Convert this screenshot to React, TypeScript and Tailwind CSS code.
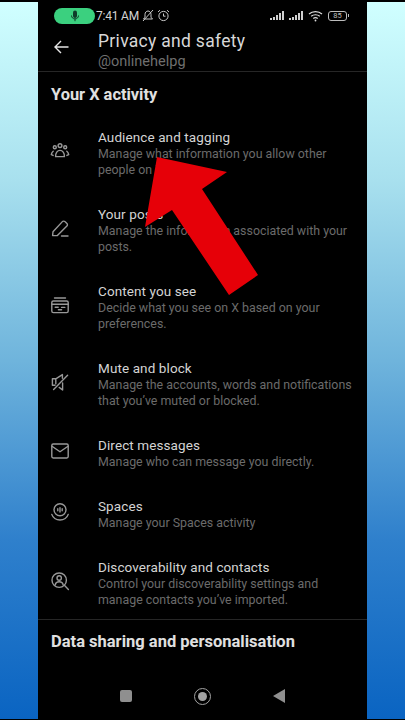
const rows = [
  { icon: 'people', title: 'Audience and tagging', desc: 'Manage what information you allow other people on X to see.' },
  { icon: 'pen', title: 'Your posts', desc: 'Manage the information associated with your posts.' },
  { icon: 'content', title: 'Content you see', desc: 'Decide what you see on X based on your preferences.' },
  { icon: 'mute', title: 'Mute and block', desc: 'Manage the accounts, words and notifications that you’ve muted or blocked.' },
  { icon: 'mail', title: 'Direct messages', desc: 'Manage who can message you directly.' },
  { icon: 'spaces', title: 'Spaces', desc: 'Manage your Spaces activity' },
  { icon: 'search', title: 'Discoverability and contacts', desc: 'Control your discoverability settings and manage contacts you’ve imported.' },
];

function RowIcon({ name }: { name: string }) {
  const common = {
    width: 20,
    height: 20,
    viewBox: '0 0 20 20',
    fill: 'none',
    stroke: '#989898',
    strokeWidth: 1.4,
    strokeLinecap: 'round' as const,
    strokeLinejoin: 'round' as const,
  };
  if (name === 'people')
    return (
      <svg {...common}>
        <circle cx="10" cy="4.6" r="1.9" />
        <circle cx="4.8" cy="6.2" r="1.5" />
        <circle cx="15.2" cy="6.2" r="1.5" />
        <path d="M5.6 15.6c-.2-3.6 1.8-6.2 4.4-6.2s4.6 2.6 4.4 6.2z" />
        <path d="M3.2 10.2c-1 .8-1.7 1.9-1.9 3.4l1.8.8M16.8 10.2c1 .8 1.7 1.9 1.9 3.4l-1.8.8" />
      </svg>
    );
  if (name === 'pen')
    return (
      <svg {...common}>
        <path d="M2.6 17.6l.4-3.8L12.4 3.6c.7-.7 1.8-.7 2.5 0l2 1.9c.7.7.7 1.8 0 2.5L7.4 17.6z" />
        <path d="M11.5 18h6.5" />
      </svg>
    );
  if (name === 'content')
    return (
      <svg {...common}>
        <path d="M4.5 3h11" />
        <rect x="1.8" y="6" width="16.4" height="11.6" rx="1.6" />
        <path d="M1.8 9.2h16.4M5.2 12.2h3M11.6 12.4h3.2M8.4 14.8h3.2" />
      </svg>
    );
  if (name === 'mute')
    return (
      <svg {...common}>
        <path d="M2.4 6.8h3.4M2.4 6.8v6.4h2.6M5.8 6.8v5M5.8 6.8l6.6-4.2v3.6M12.6 11v7l-3.4-2.6" />
        <path d="M3.6 17.4L17.6 3.2" />
      </svg>
    );
  if (name === 'mail')
    return (
      <svg {...common}>
        <rect x="1.8" y="3" width="16.4" height="14" rx="1.4" />
        <path d="M2 5.2L10 10.8l8-5.6" />
      </svg>
    );
  if (name === 'spaces')
    return (
      <svg {...common}>
        <circle cx="10" cy="7.8" r="6" />
        <path d="M7.8 6.8v2M10 5.6v4.4M12.2 6.8v2" />
        <path d="M1.8 12.4c1 3.2 4.4 5.6 8.2 5.6s7.2-2.4 8.2-5.6" />
      </svg>
    );
  return (
    <svg {...common}>
      <circle cx="9.2" cy="9.2" r="7.2" />
      <circle cx="9.2" cy="7" r="2.2" />
      <path d="M5.2 13.8c.4-2 2.2-3 4-3s3.6 1 4 3M14.6 14.6l3.8 3.8" />
    </svg>
  );
}

function SignalBars() {
  return (
    <div className="flex items-end gap-[1px] h-[9px]">
      <div className="w-[2px] h-[2px] bg-[#cfcfcf]" />
      <div className="w-[2px] h-[3px] bg-[#cfcfcf]" />
      <div className="w-[2px] h-[5px] bg-[#cfcfcf]" />
      <div className="w-[2px] h-[7px] bg-[#cfcfcf]" />
      <div className="w-[2px] h-[9px] bg-[#cfcfcf]" />
    </div>
  );
}

export default function App() {
  return (
    <div className="h-[720px] w-[405px] overflow-hidden bg-black flex relative font-['Roboto',sans-serif]">
      <div className="w-[38px] mt-[2px] mb-[1px] bg-[linear-gradient(to_bottom,#d0ffff,#a8e0ee_25%,#6fb4dc_50%,#2f80cc_75%,#0a64c2)]" />

      <div className="w-[329px] flex flex-col">
        {/* Status bar */}
        <div className="h-[30px] flex items-center pl-[16px] pr-[18px] pt-[1px]">
          <div className="w-[41px] h-[16px] rounded-full bg-[#3bd07f] flex items-center justify-center">
            <svg width="10" height="12" viewBox="0 0 10 12">
              <rect x="3" y="0.5" width="4" height="7.5" rx="2" fill="#0f3d2a" />
              <path d="M1.5 5.5c0 2 1.5 3.4 3.5 3.4s3.5-1.4 3.5-3.4M5 9v2.2" fill="none" stroke="#0f3d2a" strokeWidth="1" />
            </svg>
          </div>
          <span className="text-[12px] text-[#d4d4d4] ml-[1px] tracking-[-0.2px]">7:41 AM</span>
          <svg className="ml-[3px]" width="12" height="13" viewBox="0 0 12 13" fill="none" stroke="#c8c8c8" strokeWidth="1">
            <path d="M1.5 10h9L9 8.2V5.4C9 3.5 7.7 2 6 2S3 3.5 3 5.4v2.8zM1 12L11 1" />
          </svg>
          <svg className="ml-[3px]" width="13" height="13" viewBox="0 0 13 13" fill="none" stroke="#c8c8c8" strokeWidth="1">
            <circle cx="6.5" cy="7" r="4.6" />
            <path d="M6.5 4.5v2.700h2M1 3L3 1.2M12 3L10 1.2" />
          </svg>
          <div className="ml-auto flex items-center gap-[2px]">
            <SignalBars />
            <div className="w-[1px]" />
            <SignalBars />
            <svg className="ml-[3px]" width="15" height="12" viewBox="0 0 15 12" fill="none" stroke="#dcdcdc" strokeWidth="1.2">
              <path d="M1 4c3.600-3.200 9.400-3.200 13 0M3.200 6.300c2.400-2.100 6.200-2.100 8.600 0M5.300 8.500c1.100-.9 3.300-.9 4.400 0" />
              <circle cx="7.5" cy="10.5" r="0.9" fill="#dcdcdc" stroke="none" />
            </svg>
            <div className="ml-[3px] w-[19px] h-[10px] rounded-[3px] border border-[#bdbdbd] flex items-center justify-center text-[7.5px] leading-none text-[#bdbdbd]">
              85
            </div>
            <div className="w-[1px] h-[3px] ml-[-1px] bg-[#bdbdbd]" />
          </div>
        </div>

        {/* Header */}
        <div className="h-[42px] flex border-b border-[#262626]">
          <div className="w-[60px] pl-[16px] pt-[10px]">
            <svg width="15" height="14" viewBox="0 0 15 14" fill="none" stroke="#e5e5e5" strokeWidth="1.4">
              <path d="M14.5 7H1.2M7 1L1 7l6 6" />
            </svg>
          </div>
          <div>
            <div className="text-[17.5px] leading-[22px] text-[#d8d8d8] tracking-[0.3px]">Privacy and safety</div>
            <div className="text-[14.5px] leading-[17px] mt-[1px] text-[#6f6f6f]">@onlinehelpg</div>
          </div>
        </div>

        <div className="px-[13px] pt-[12px] h-[42.5px] text-[16.4px] leading-[21px] font-bold text-[#e0e0e0]">Your X activity</div>

        {/* Rows */}
        <div className="flex flex-col">
          {rows.map((row) => (
            <div key={row.title} className="flex items-center py-[14px] last:pb-[11px] pr-[10px]">
              <div className="w-[60px] shrink-0 pl-[12px] mb-[4px]">
                <RowIcon name={row.icon} />
              </div>
              <div className="min-w-0">
                <div className="text-[13.5px] leading-[17px] text-[#d4d4d4] tracking-[0.1px]">{row.title}</div>
                <div className="text-[12.4px] leading-[16px] text-[#6b6b6b]">{row.desc}</div>
              </div>
            </div>
          ))}
        </div>

        <div className="h-[1px] bg-[#262626]" />
        <div className="px-[13px] pt-[11px] text-[16.5px] leading-[21px] font-bold text-[#e0e0e0]">Data sharing and personalisation</div>

        {/* Nav bar */}
        <div className="mt-auto h-[44px] flex items-start justify-center gap-[62px] pt-[12px]">
          <div className="w-[12px] h-[12px] mt-[2px] rounded-[2px] bg-[#8f8f8f]" />
          <div className="w-[17px] h-[17px] rounded-full border-[1.5px] border-[#a3a3a3] flex items-center justify-center">
            <div className="w-[9px] h-[9px] rounded-full bg-[#a3a3a3]" />
          </div>
          <svg className="mt-[1px]" width="12" height="14" viewBox="0 0 12 14">
            <path d="M12 0v14L0 7z" fill="#8f8f8f" />
          </svg>
        </div>
      </div>

      <div className="w-[38px] mt-[2px] mb-[1px] bg-[linear-gradient(to_bottom,#d0ffff,#a8e0ee_25%,#6fb4dc_50%,#2f80cc_75%,#0a64c2)]" />

      {/* Red arrow pasted over the screenshot */}
      <svg className="absolute left-0 top-0" width="405" height="720" viewBox="0 0 405 720">
        <path d="M157 157L227 172L202 189L258 275L229 295L172 210L145 227z" fill="#e60008" />
      </svg>
    </div>
  );
}
